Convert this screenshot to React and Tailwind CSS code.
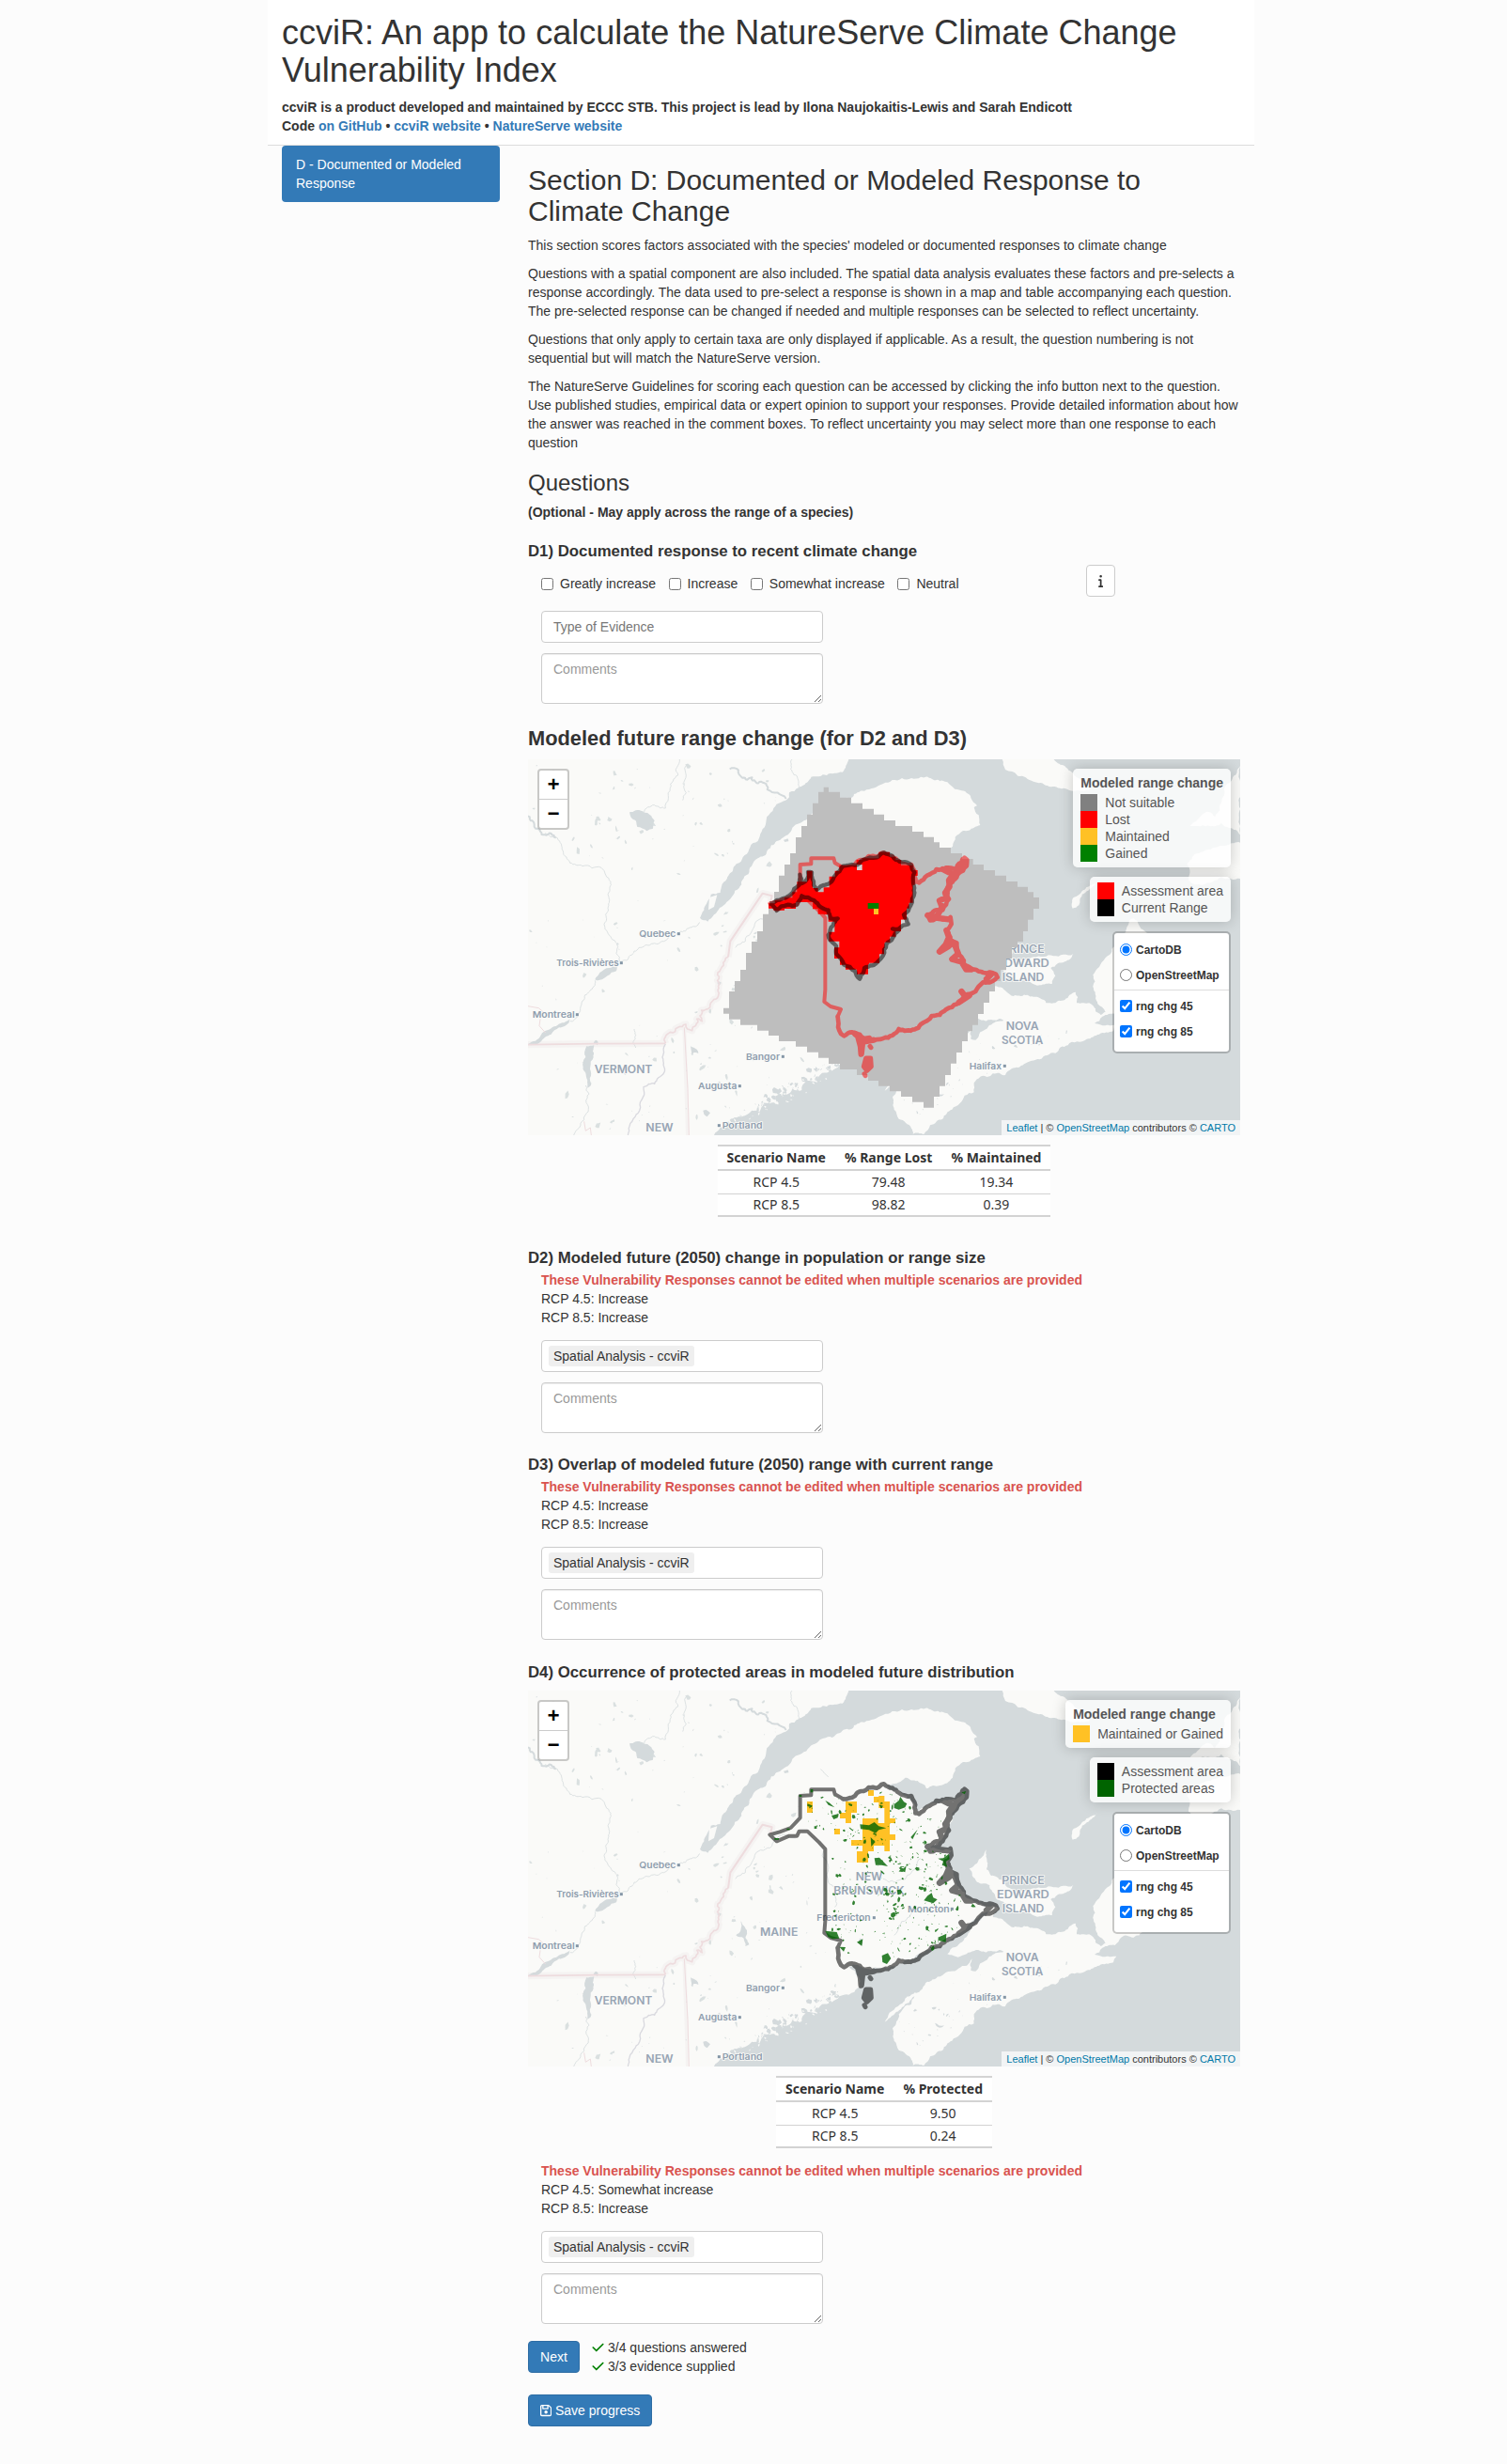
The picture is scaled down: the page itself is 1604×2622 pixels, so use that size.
import React from "react";
import { FaInfo, FaCheck } from "react-icons/fa6";

/* ---------- deterministic geometry helpers for the map drawing ---------- */

function rng(seed) {
  let s = seed;
  return () => {
    s = (s + 0x6d2b79f5) | 0;
    let t = Math.imul(s ^ (s >>> 15), 1 | s);
    t = (t + Math.imul(t ^ (t >>> 7), 61 | t)) ^ t;
    return ((t ^ (t >>> 14)) >>> 0) / 4294967296;
  };
}

function parse(str) {
  return str.trim().split(/\s+/).map((p) => p.split(",").map(Number));
}

// Subdivides every edge and shifts the midpoints, which gives a natural shoreline.
function rough(str, amp = 0.2, seed = 7, min = 9) {
  const rand = rng(seed);
  const pts = parse(str);
  const out = [pts[0]];
  const split = (a, b) => {
    const dx = b[0] - a[0];
    const dy = b[1] - a[1];
    const d = Math.hypot(dx, dy);
    if (d < min || d > 420) {
      out.push(b);
      return;
    }
    const k = (rand() - 0.5) * 2 * amp * (d > 60 ? 0.4 : 1);
    const m = [(a[0] + b[0]) / 2 - dy * k, (a[1] + b[1]) / 2 + dx * k];
    split(a, m);
    split(m, b);
  };
  for (let i = 1; i < pts.length; i++) split(pts[i - 1], pts[i]);
  return "M" + out.map((p) => p[0].toFixed(1) + "," + p[1].toFixed(1)).join("L");
}

function inside(pt, poly) {
  let c = false;
  for (let i = 0, j = poly.length - 1; i < poly.length; j = i++) {
    const [xi, yi] = poly[i];
    const [xj, yj] = poly[j];
    if (yi > pt[1] !== yj > pt[1] && pt[0] < ((xj - xi) * (pt[1] - yi)) / (yj - yi) + xi) c = !c;
  }
  return c;
}

function specks(poly, count, seed, min, max) {
  const rand = rng(seed);
  const xs = poly.map((p) => p[0]);
  const ys = poly.map((p) => p[1]);
  const x0 = Math.min(...xs);
  const y0 = Math.min(...ys);
  const w = Math.max(...xs) - x0;
  const h = Math.max(...ys) - y0;
  let d = "";
  let n = 0;
  while (n < count) {
    const p = [x0 + rand() * w, y0 + rand() * h];
    if (!inside(p, poly)) continue;
    n++;
    const r = min + Math.pow(rand(), 2.4) * (max - min);
    const a0 = rand() * 6.28;
    const flat = 0.25 + rand() * 0.6;
    const k = 5 + Math.floor(rand() * 3);
    const q = [];
    for (let i = 0; i < k; i++) {
      const a = (i / k) * 6.28;
      const rr = r * (0.5 + rand() * 0.8);
      const ex = Math.cos(a) * rr;
      const ey = Math.sin(a) * rr * flat;
      q.push((p[0] + ex * Math.cos(a0) - ey * Math.sin(a0)).toFixed(1) + "," + (p[1] + ex * Math.sin(a0) + ey * Math.cos(a0)).toFixed(1));
    }
    d += "M" + q.join("L") + "Z";
  }
  return d;
}

/* ------------------------------ base map ------------------------------ */

const SEA = rough(
  "555,515 570,480 590,440 620,435 632,400 655,370 680,340 715,290 740,270 752,240 780,180 790,165 840,130 840,115 870,100 900,80 910,65 960,60 1010,50 1030,9 2280,9 2280,1209 600,1209 620,1185 645,1165 690,1150 720,1130 745,1135 765,1108 800,1110 795,1085 830,1080 850,1060 880,1065 895,1035 930,1040 945,1010 975,1005 1000,985 1030,980 1065,957 1060,920 1030,890 1060,885 1100,900 1140,895 1185,885 1240,862 1290,835 1345,815 1390,780 1430,740 1450,725 1475,715 1440,750 1410,790 1370,828 1345,850 1400,852 1450,840 1530,845 1490,852 1450,880 1435,905 1420,902 1425,865 1330,917 1270,952 1210,992 1160,1037 1145,1067 1200,1020 1240,985 1230,1010 1190,1042 1170,1087 1175,1127 1190,1157 1230,1187 1235,1206 1270,1206 1290,1177 1330,1157 1360,1127 1385,1107 1400,1082 1430,1072 1430,1042 1450,1022 1490,1012 1530,1017 1550,997 1590,982 1640,967 1690,947 1730,922 1790,902 1830,887 1875,877 1885,857 1815,852 1840,830 1860,822 1880,822 1900,797 1940,797 1970,777 2000,770 2100,700 2100,640 1975,557 1940,517 1925,525 1915,560 1880,600 1870,617 1830,672 1810,697 1812,740 1825,790 1850,815 1835,825 1812,797 1780,787 1758,787 1755,752 1720,777 1685,787 1660,787 1620,767 1580,765 1535,752 1490,732 1510,705 1490,695 1440,685 1405,670 1385,640 1365,600 1345,565 1360,520 1290,510 1330,480 1350,440 1360,400 1400,350 1395,330 1370,357 1330,362 1290,370 1250,398 1235,365 1215,345 1160,325 1140,308 1170,307 1195,300 1210,287 1250,297 1280,322 1320,312 1362,287 1370,257 1395,237 1430,227 1450,219 1445,187 1430,162 1440,157 1420,132 1385,107 1330,77 1260,65 1200,69 1140,87 1080,110 1000,145 905,190 880,210 840,245 800,270 770,300 740,325 720,350 690,395 680,420 640,465 600,505 580,527 555,515",
  0.16,
  11
);

const ISLANDS = [
  rough("1520,9 1530,42 1570,62 1620,80 1710,103 1760,108 1800,106 1790,90 1750,60 1715,28 1685,9", 0.12, 3),
  rough("1415,577 1440,560 1470,517 1474,560 1470,580 1485,600 1520,615 1560,650 1620,640 1747,630 1720,655 1675,675 1690,700 1680,725 1640,730 1580,715 1540,700 1500,672 1480,630 1440,620 1415,577", 0.15, 5),
  rough("1742,470 1748,450 1775,430 1805,410 1825,398 1815,412 1775,440 1765,475 1745,485 1742,470", 0.15, 9),
  rough("2110,345 2140,310 2200,290 2280,275 2280,390 2220,385 2160,410 2115,395 2110,345", 0.15, 13),
  rough("2120,222 2180,177 2200,192 2230,100 2280,30 2280,250 2220,212 2140,222", 0.15, 15),
];

const LAKES = [
  rough("330,178 350,172 372,175 400,190 410,205 405,230 385,238 355,225 350,205 335,195 330,178", 0.12, 4),
  rough("220,712 235,690 265,675 290,672 288,685 260,700 225,715", 0.12, 6),
  rough("6,918 30,908 55,880 80,868 100,858 140,838 137,850 105,865 80,887 45,912 15,922", 0.12, 8),
  rough("192,925 217,922 215,960 205,990 207,1050 196,1058 190,1010 182,992 190,960 192,925", 0.15, 10),
  rough("215,915 222,905 230,912 228,922 215,915", 0.15, 12),
  rough("565,1130 575,1128 588,1138 578,1150 568,1142", 0.2, 14),
  rough("685,745 695,760 705,780 712,820 700,825 695,800 670,790 685,775 685,745", 0.2, 16),
  rough("822,266 835,262 838,271 826,273", 0.2, 17),
  rough("525,925 545,935 550,948 535,945 530,955", 0.2, 18),
  rough("1065,800 1072,802 1070,825 1060,815", 0.2, 19),
  rough("1305,1070 1335,1078 1320,1085 1310,1080", 0.3, 20),
];

const RIVERS = [
  "490,9 485,60 460,100 445,165 410,155 375,180",
  "60,245 100,260 140,340 180,350 240,355 270,400 250,540 290,600 300,655 360,610 440,590 490,560 555,530",
  "220,715 180,780 165,830 140,845",
  "850,9 850,50 870,80 870,100",
  "510,30 505,90 500,140",
  "190,1050 185,1160 152,1209",
  "345,870 350,890 342,910 350,930",
  "668,610 700,590 730,535 785,505 830,470 860,480",
  "940,260 965,285",
  "950,520 960,600 990,650 985,700",
  "1175,790 1190,760 1215,740 1240,700",
  "1140,610 1180,620 1230,590 1260,545",
];

const WIDE_RIVERS = ["650,40 690,68 750,80 770,105 830,135", "6,190 20,205 30,230 60,250 95,260"];

const NORTH_LAND = parse("6,9 480,9 760,30 820,130 740,220 690,300 600,400 540,480 480,420 250,330 6,280");
const SOUTH_LAND = parse("600,520 740,380 860,260 900,300 880,560 1000,960 850,1050 620,1160 520,1209 150,1209 80,960 440,930 620,700");
const WEST_LAND = parse("6,300 260,360 560,560 560,780 440,900 6,780");
const MAINE_COAST = parse("640,1130 760,1090 900,1010 1000,975 1010,1000 930,1060 820,1110 690,1175 620,1200");
const LAKE_SPECKS = specks(NORTH_LAND, 60, 21, 2, 13) + specks(SOUTH_LAND, 100, 33, 2, 13) + specks(WEST_LAND, 22, 45, 2, 11);
const BAY_SPECKS = specks(parse("600,1190 760,1085 900,1000 1000,960 1000,990 900,1060 760,1120 640,1180"), 75, 51, 2, 14);
const ISLET_SPECKS = specks(MAINE_COAST, 55, 57, 2, 9);
const NS_SPECKS = specks(parse("1180,1060 1300,960 1420,900 1560,880 1700,850 1780,870 1540,970 1400,1060 1260,1150 1200,1130"), 40, 63, 1.5, 9);

const BORDER = rough(
  "445,916 460,880 485,865 510,855 530,875 545,838 562,845 560,810 600,775 615,740 612,690 645,640",
  0.25,
  23
);
const CONNECTICUT = rough("445,918 435,960 440,1010 410,1045 375,1055 365,1120 330,1180 325,1209", 0.15, 25);

function BaseMap() {
  return (
    <g>
      <rect x="6" y="9" width="2274" height="1200" fill="#fafaf8" />
      <g fill="none" stroke="#f5f3f2" strokeWidth="22" strokeLinejoin="round">
        <path d="M6,920L220,917L445,916" />
        <path d={BORDER} />
        <path d="M645,640L652,590L755,437L785,445L780,465" />
        <path d="M505,865L516,1209" strokeWidth="12" />
      </g>
      <path d={SEA} fill="#d4dadc" />
      <g fill="#d4dadc">
        {LAKES.map((d, i) => (
          <path key={i} d={d + "Z"} />
        ))}
        <path d={LAKE_SPECKS} opacity="0.85" />
        <path d={BAY_SPECKS} />
        <path d={NS_SPECKS} />
      </g>
      <g fill="#fafaf8">
        {ISLANDS.map((d, i) => (
          <path key={i} d={d + "Z"} />
        ))}
        <path d={ISLET_SPECKS} />
        <path d="M585,450L610,442L600,480L582,490Z" />
      </g>
      <g fill="none" stroke="#dde2e3" strokeWidth="3" strokeLinejoin="round">
        {RIVERS.map((p, i) => (
          <path key={i} d={rough(p, 0.2, 70 + i)} />
        ))}
      </g>
      <g fill="none" stroke="#d4dadc" strokeWidth="6" strokeLinejoin="round">
        {WIDE_RIVERS.map((p, i) => (
          <path key={i} d={rough(p, 0.3, 90 + i)} />
        ))}
      </g>
      <g fill="none" stroke="#eedcde" strokeWidth="5" strokeLinejoin="round">
        <path d="M6,920L220,917L445,916" />
        <path d={BORDER} />
        <path d="M645,640L652,590L755,437L785,445L780,465" strokeWidth="6" />
        <path d="M505,865L516,1060L520,1209" strokeWidth="3" />
        <path d="M6,797L40,803L60,820M45,838L42,860L62,882" strokeWidth="3" />
        <path d="M185,1165L190,1195L205,1185L208,1209" strokeWidth="3" />
      </g>
      <path d={CONNECTICUT} fill="none" stroke="#d9d9df" strokeWidth="4" />
    </g>
  );
}

const CITIES = [
  ["Quebec", 361, 577, 117, 487, 566],
  ["Trois-Rivières", 97, 669, 199, 304, 659],
  ["Montreal", 20, 833, 135, 163, 824],
  ["Bangor", 702, 969, 108, 820, 958],
  ["Augusta", 549, 1062, 124, 682, 1052],
  ["Portland", 626, 1188, 129, 616, 1178],
  ["Halifax", 1415, 998, 103, 1528, 988],
  ["Fredericton", 928, 744, 172, 1111, 734],
  ["Moncton", 1218, 716, 134, 1360, 706],
];

const REGIONS = [
  ["VERMONT", 218, 1010, 185],
  ["NEW", 382, 1197, 88],
  ["MAINE", 747, 793, 121],
  ["NEW", 1052, 616, 86],
  ["BRUNSWICK", 982, 660, 226],
  ["PRINCE", 1519, 628, 136],
  ["EDWARD", 1503, 672, 167],
  ["ISLAND", 1520, 716, 134],
  ["NOVA", 1532, 874, 105],
  ["SCOTIA", 1518, 918, 133],
];

function Labels() {
  return (
    <g fill="#8f9eae" stroke="#fafaf8" strokeWidth="5" strokeLinejoin="round" paintOrder="stroke" fontFamily="Inter, sans-serif">
      {CITIES.map(([t, x, y, w, dx, dy]) => (
        <g key={t}>
          <text x={x} y={y} fontSize="28" fontWeight="600" textLength={w} lengthAdjust="spacingAndGlyphs">
            {t}
          </text>
          <rect x={dx - 4.5} y={dy - 4.5} width="9" height="9" fill="#8496a6" strokeWidth="3" />
        </g>
      ))}
      {REGIONS.map(([t, x, y, w], i) => (
        <text key={i} x={x} y={y} fontSize="34" fontWeight="600" fill="#98a5b4" textLength={w} lengthAdjust="spacingAndGlyphs">
          {t}
        </text>
      ))}
    </g>
  );
}

/* ------------------------------ overlays ------------------------------ */

const SUITABILITY =
  "M950,98H966V113H1002V131H1038V149H1074V167H1110V185H1143V204H1179V222H1233V240H1269V257H1302V274H1320V291H1356V309H1392V327H1427V345H1461V363H1497V380H1533V399H1569V416H1602V433H1620V450H1638V486H1620V521H1602V558H1587V591H1569V610H1551V645H1533V682H1515V717H1497V750H1479V786H1461V822H1443V857H1425V877H1410V909H1392V945H1374V980H1356V1017H1338V1052H1320V1086H1302V1121H1269V1103H1233V1086H1197V1069H1161V1052H1125V1035H1092V1017H1056V999H1002V981H966V962H933V944H897V926H861V909H807V891H774V875H738V857H684V839H648V821H630V803H648V750H666V717H684V681H702V627H720V591H738V558H756V503H774V468H792V432H807V380H825V345H843V309H861V258H879V222H897V185H915V149H933V113H950Z";

const ASSESSMENT_INLAND =
  "M245,575L255,552L222,543L202,528L205,490L205,260L185,238L148,203L122,203L115,218L90,218L50,235L28,214L60,205L95,192L125,160L125,90L160,88L160,70L232,70L236,85L262,100";
const ASSESSMENT_COAST = rough(
  "262,100 300,90 320,75 370,65 392,52 420,65 440,80 480,90 490,110 493,145 505,148 530,125 560,105 590,100 620,105 640,85 650,68 658,75 645,110 625,130 605,150 595,175 600,200 580,235 535,250 540,268 580,265 605,258 608,280 595,300 605,330 625,340 625,370 640,385 650,410 680,425 710,435 750,440 755,450 710,465 685,495 650,510 640,525 610,545 590,553 545,573 510,600 465,620 440,615 420,635 390,645 350,650 330,645 315,632 290,625 265,637 250,620 245,575",
  0.16,
  31,
  12
);
const ASSESSMENT_SHOALS =
  "M645,75L638,105L615,120L600,115L580,105M615,120L600,140L602,160L588,180L592,195L570,205L578,225L565,250L548,262L532,252M545,258L600,265M592,300L600,322L590,345L570,368L600,350L612,340M620,350L630,375L610,392L640,400L655,425L670,425M640,495L655,515L632,530L665,508M310,640L318,670L320,695L325,650L345,645M300,630L330,655L360,650M735,440L720,455";
const GRAND_MANAN = "M335,708L350,708L352,735L338,748L328,735Z";

function AssessmentOutline({ color, opacity }) {
  return (
    <g opacity={opacity} fill="none" stroke={color} strokeWidth="14" strokeLinejoin="round" strokeLinecap="round">
      <path d={ASSESSMENT_INLAND} strokeWidth="12" />
      <path d={ASSESSMENT_COAST} />
      <path d={ASSESSMENT_SHOALS} strokeWidth="19" />
      <path d={GRAND_MANAN} fill={color} strokeWidth="15" />
      <path d="M330,758L333,764M348,670L351,674" strokeWidth="15" />
    </g>
  );
}

const CURRENT_RANGE = rough(
  "28,214 60,203 95,185 122,155 124,122 130,150 148,135 150,114 162,115 168,155 178,170 205,155 225,145 245,115 262,95 300,92 325,75 370,67 392,52 425,70 450,82 480,92 490,115 486,150 490,180 478,220 456,250 470,280 440,295 420,295 440,300 400,345 390,380 355,412 330,420 327,435 315,455 300,430 265,410 240,375 240,350 220,330 215,315 230,285 245,262 222,262 215,235 190,225 170,205 130,190 115,218 85,218 50,237 28,214",
  0.14,
  37,
  12
);
const LOST =
  "M24,214H45V205H75V196H100V178H115V145H130V145H147V110H164V145H165V165H182V178H200V163H218V128H236V110H250V92H305V75H323V70H376V50H411V65H430V75H447V92H485V108H500V126H491V155H485V212H473V230H465V266H447V285H447V303H430V320H412V338H395V357H393V376H378V404H345V408H342V440H306V425H270V410H252V390H234V355H250V335H217V305H235V272H215V250H200V248H182V232H165V210H147V210H111V231H75V236H40V230H24Z";

function RangeChangeOverlay() {
  return (
    <g>
      <path d={SUITABILITY} fill="#bebebe" />
      <g transform="translate(750,255)">
        <AssessmentOutline color="#ff0000" opacity="0.5" />
        <path d={LOST} fill="#ff0000" />
        <path d="M306,90H323V108H306ZM447,266H465V284H447Z" fill="#d3d3d3" />
        <path d="M341,213H376V231H341Z" fill="#008000" />
        <path d="M360,231H375V249H360Z" fill="#ffc125" />
        <path d={CURRENT_RANGE} fill="none" stroke="#000" strokeOpacity="0.5" strokeWidth="13" strokeLinejoin="round" />
      </g>
    </g>
  );
}

const MAINTAINED =
  "M147,111h18v36h-18ZM270,111h36v36h-18v33h-18v-15h-18v-18h18ZM342,75h18v18h-18ZM376,93h18v18h17v54h18v15h-18v36h18v18h-18v36h-17v-18h-34v18h-18v36h-36v-36h18v-18h-36v-18h36v-69h50v15h20v-48h-18v-18h-16v-18h16ZM234,198h18v18h-18Z";

const PROTECTED_BLOBS =
  "M425,120L440,108L445,96L456,112L466,118L460,130L440,137L425,132ZM316,184L345,187L362,177L376,190L400,196L376,202L366,212L345,202L318,199ZM362,292L378,290L405,318L385,314L366,314ZM440,322L455,325L464,316L460,337L447,332ZM520,427L532,412L545,403L550,418L563,424L550,436ZM205,524L242,528L250,548L228,550L214,543ZM386,603L405,595L415,612L402,630L388,624ZM565,545L592,533L590,560L568,555ZM565,293L582,292L600,278L602,295L590,303L595,320L578,314L582,302ZM225,156L248,150L245,163L232,168ZM250,575L270,576L264,590ZM205,108L218,115L235,130L215,122ZM306,560L325,550L322,572ZM478,225L500,200L490,220L484,232ZM350,225L365,240L352,255ZM640,82L655,78L650,88Z";

const PARKS = specks(parse("140,110 230,90 270,115 380,75 480,110 500,160 585,130 570,220 530,260 590,280 600,330 560,340 470,330 350,290 230,250 140,170"), 150, 101, 1.5, 9) +
  specks(parse("220,290 560,270 600,380 690,450 620,520 480,600 300,625 255,560 220,520"), 180, 113, 1.5, 8) +
  specks(parse("380,400 470,390 440,500 385,490"), 26, 127, 3, 10) +
  specks(parse("520,575 570,545 620,505 600,540 550,580"), 16, 131, 2, 8);

function ProtectedOverlay() {
  return (
    <g transform="translate(750,252)">
      <path d={MAINTAINED} fill="#ffc125" />
      <g transform="translate(0,3)">
        <AssessmentOutline color="#000000" opacity="0.54" />
      </g>
      <g fill="#006400" opacity="0.8">
        <path d={PARKS} />
        <path d={PROTECTED_BLOBS} />
        <path d="M158,72h8v10h-8ZM122,90h8v6h-8ZM82,197h10v5h-10ZM43,228h14v5h-14ZM170,190h8v8h-8ZM148,118l16,6l-2,6l-14,-4Z" />
      </g>
    </g>
  );
}

/* ---------------------------- map widgets ----------------------------- */

function Legend({ title, items }) {
  return (
    <div className="rounded-[5px] bg-white/80 px-2 py-1.5 text-[14px] leading-[18px] text-[#555] shadow-[0_0_15px_rgba(0,0,0,0.2)]">
      {title && <div className="mb-[3px] font-bold">{title}</div>}
      {items.map(([color, label]) => (
        <div key={label} className="flex h-[18px] items-center whitespace-nowrap">
          <i className="mr-2 block size-[18px]" style={{ background: color }} />
          {label}
        </div>
      ))}
    </div>
  );
}

function LayerRow({ type, label, checked, name }) {
  return (
    <label className="flex h-[27px] items-start">
      <input type={type} name={name} defaultChecked={checked} className="m-0 mt-[5px] mr-1 size-[13px]" />
      <span className="leading-[25px]">{label}</span>
    </label>
  );
}

function LayerControl({ name }) {
  return (
    <div className="h-[130px] w-[126px] rounded-[5px] border-2 border-black/20 bg-white bg-clip-padding pt-[6px] text-[12px] font-bold text-[#333]">
      <div className="pl-1.5">
        <LayerRow type="radio" name={name} label="CartoDB" checked />
        <LayerRow type="radio" name={name} label="OpenStreetMap" />
      </div>
      <div className="mb-[5px] border-t border-[#ddd]" />
      <div className="pl-1.5">
        <LayerRow type="checkbox" label="rng chg 45" checked />
        <LayerRow type="checkbox" label="rng chg 85" checked />
      </div>
    </div>
  );
}

function LeafletMap({ children, legends, name }) {
  return (
    <div className="relative h-[400px] w-[758px] overflow-hidden">
      <svg viewBox="6 9 2274 1200" className="block h-[400px] w-[758px]">
        <BaseMap />
        <Labels />
        {children}
      </svg>
      <div className="absolute top-[10px] left-[10px] w-[34px] rounded-[4px] border-2 border-black/20 bg-white bg-clip-padding text-center font-['Liberation_Mono',monospace] text-[22px] font-bold text-black">
        <div className="h-[31px] border-b border-[#ccc] leading-[34px]">+</div>
        <div className="h-[30px] leading-[33px]">−</div>
      </div>
      <div className="absolute top-[10px] right-[10px] flex flex-col items-end gap-[10px]">
        {legends}
        <LayerControl name={name} />
      </div>
      <div className="absolute right-0 bottom-0 h-4 bg-white/70 px-[5px] text-[11px] leading-4 whitespace-nowrap text-[#333]">
        <span className="text-[#0078a8]">Leaflet</span> | © <span className="text-[#0078a8]">OpenStreetMap</span> contributors ©{" "}
        <span className="text-[#0078a8]">CARTO</span>
      </div>
    </div>
  );
}

/* ----------------------------- page parts ----------------------------- */

function DataTable({ head, rows }) {
  return (
    <table className="mx-auto border-collapse border-y-2 border-[#d3d3d3] bg-white text-center font-['Noto_Sans',sans-serif] text-[14px] leading-4 text-[#333]">
      <thead>
        <tr className="h-[26px] border-b-2 border-[#d3d3d3]">
          {head.map((h) => (
            <th key={h} className="px-[10px] py-0 font-bold">
              {h}
            </th>
          ))}
        </tr>
      </thead>
      <tbody>
        {rows.map((r) => (
          <tr key={r[0]} className="h-[25px] border-b border-[#d3d3d3] last:h-6 last:border-b-0">
            {r.map((c) => (
              <td key={c} className="p-0">
                {c}
              </td>
            ))}
          </tr>
        ))}
      </tbody>
    </table>
  );
}

function Comments() {
  return (
    <textarea
      placeholder="Comments"
      className="mt-[11px] block h-[54px] w-[300px] resize rounded-[4px] border border-[#ccc] bg-white px-3 py-1.5 text-[14px] leading-5 shadow-[inset_0_1px_1px_rgba(0,0,0,0.075)] placeholder:text-[#999]"
    />
  );
}

function ScenarioAnswer({ first, second }) {
  return (
    <div className="ml-[14px]">
      <div className="font-bold text-[#d9534f]">These Vulnerability Responses cannot be edited when multiple scenarios are provided</div>
      <div>RCP 4.5: {first}</div>
      <div>RCP 8.5: {second}</div>
      <div className="mt-[14px] flex h-[34px] w-[300px] items-center rounded-[4px] border border-[#ccc] bg-white pl-[7px]">
        <span className="h-[22px] rounded-[3px] bg-[#efefef] px-[5px] leading-[22px]">Spatial Analysis - ccviR</span>
      </div>
      <Comments />
    </div>
  );
}

function QuestionTitle({ children }) {
  return <h4 className="h-5 text-[16.8px] leading-[22px] font-bold whitespace-nowrap">{children}</h4>;
}

function SaveIcon() {
  return (
    <svg viewBox="0 0 448 512" className="mr-1 inline-block h-[14px] w-[12.25px] align-[-2px]" fill="currentColor">
      <path d="M48 96V416c0 8.800 7.200 16 16 16H384c8.800 0 16-7.200 16-16V170.500c0-4.200-1.700-8.300-4.700-11.300l33.900-33.900c12 12 18.700 28.300 18.700 45.300V416c0 35.300-28.700 64-64 64H64c-35.300 0-64-28.700-64-64V96C0 60.700 28.700 32 64 32H309.500c17 0 33.300 6.700 45.300 18.700l74.500 74.500-33.900 33.900L320.800 84.700V184c0 13.300-10.700 24-24 24H104c-13.300 0-24-10.700-24-24V80H64c-8.800 0-16 7.200-16 16zm80-16v80H272V80H128zm32 240a64 64 0 1 1 128 0 64 64 0 1 1-128 0z" />
    </svg>
  );
}

export default function App() {
  return (
    <div className="h-[2622px] overflow-hidden bg-[#fcfcfc] font-['Liberation_Sans',Arial,sans-serif] text-[14px] leading-5 text-[#333]">
      <div className="ml-[285px] w-[1050px]">
        <header className="h-[155px] border-b border-[#ddd] bg-white px-[15px] pt-[15px]">
          <h1 className="mb-[10px] h-[79px] text-[36px] leading-[39.6px]">ccviR: An app to calculate the NatureServe Climate Change Vulnerability Index</h1>
          <div className="font-bold">
            ccviR is a product developed and maintained by ECCC STB. This project is lead by Ilona Naujokaitis-Lewis and Sarah Endicott
            <br />
            Code <a className="text-[#337ab7]">on GitHub</a> • <a className="text-[#337ab7]">ccviR website</a> •{" "}
            <a className="text-[#337ab7]">NatureServe website</a>
          </div>
        </header>

        <div className="flex items-start gap-[30px] pl-[15px]">
          <nav className="w-[232px] shrink-0">
            <a className="block rounded-[4px] bg-[#337ab7] px-[15px] py-[10px] text-white">D - Documented or Modeled Response</a>
          </nav>

          <main className="w-[758px] shrink-0 pt-5">
            <h2 className="text-[30px] leading-[33px]">Section D: Documented or Modeled Response to Climate Change</h2>
            <p className="mt-[10px]">This section scores factors associated with the species' modeled or documented responses to climate change</p>
            <p className="mt-[10px]">
              Questions with a spatial component are also included. The spatial data analysis evaluates these factors and pre-selects a
              response accordingly. The data used to pre-select a response is shown in a map and table accompanying each question. The
              pre-selected response can be changed if needed and multiple responses can be selected to reflect uncertainty.
            </p>
            <p className="mt-[10px]">
              Questions that only apply to certain taxa are only displayed if applicable. As a result, the question numbering is not
              sequential but will match the NatureServe version.
            </p>
            <p className="mt-[10px]">
              The NatureServe Guidelines for scoring each question can be accessed by clicking the info button next to the question. Use
              published studies, empirical data or expert opinion to support your responses. Provide detailed information about how the
              answer was reached in the comment boxes. To reflect uncertainty you may select more than one response to each question
            </p>
            <h3 className="mt-5 h-9 text-[24px] leading-[26px]">Questions</h3>
            <h5 className="h-[39px] leading-4 font-bold">(Optional - May apply across the range of a species)</h5>

            <QuestionTitle>D1) Documented response to recent climate change</QuestionTitle>
            <div className="mt-[5px] ml-[14px] flex h-[34px] items-start">
              <div className="flex w-[580px] gap-[13.6px] pt-[10px]">
                {["Greatly increase", "Increase", "Somewhat increase", "Neutral"].map((t) => (
                  <label key={t} className="flex">
                    <input type="checkbox" className="m-0 mt-1 mr-[7px] size-[13px]" />
                    {t}
                  </label>
                ))}
              </div>
              <button className="flex h-[34px] w-[31px] items-center justify-center rounded-[4px] border border-[#ccc] bg-white">
                <FaInfo className="h-[14px] w-[5.25px]" />
              </button>
            </div>
            <div className="ml-[14px]">
              <div className="mt-[15px] h-[34px] w-[300px] rounded-[4px] border border-[#ccc] bg-white px-3 leading-[33px] text-[#777]">
                Type of Evidence
              </div>
              <Comments />
            </div>

            <h3 className="mt-[25px] h-[34px] text-[21.84px] leading-6 font-bold">Modeled future range change (for D2 and D3)</h3>
            <LeafletMap
              name="base-a"
              legends={
                <>
                  <Legend
                    title="Modeled range change"
                    items={[
                      ["#808080", "Not suitable"],
                      ["#ff0000", "Lost"],
                      ["#ffc125", "Maintained"],
                      ["#008000", "Gained"],
                    ]}
                  />
                  <Legend
                    items={[
                      ["#ff0000", "Assessment area"],
                      ["#000000", "Current Range"],
                    ]}
                  />
                </>
              }
            >
              <RangeChangeOverlay />
            </LeafletMap>
            <div className="h-[120px] pt-[10px]">
              <DataTable
                head={["Scenario Name", "% Range Lost", "% Maintained"]}
                rows={[
                  ["RCP 4.5", "79.48", "19.34"],
                  ["RCP 8.5", "98.82", "0.39"],
                ]}
              />
            </div>

            <QuestionTitle>D2) Modeled future (2050) change in population or range size</QuestionTitle>
            <div className="mt-1 h-[196px]">
              <ScenarioAnswer first="Increase" second="Increase" />
            </div>

            <QuestionTitle>D3) Overlap of modeled future (2050) range with current range</QuestionTitle>
            <div className="mt-1 h-[197px]">
              <ScenarioAnswer first="Increase" second="Increase" />
            </div>

            <QuestionTitle>D4) Occurrence of protected areas in modeled future distribution</QuestionTitle>
            <div className="mt-[10px]">
              <LeafletMap
                name="base-b"
                legends={
                  <>
                    <Legend title="Modeled range change" items={[["#ffc125", "Maintained or Gained"]]} />
                    <Legend
                      items={[
                        ["#000000", "Assessment area"],
                        ["#006400", "Protected areas"],
                      ]}
                    />
                  </>
                }
              >
                <ProtectedOverlay />
              </LeafletMap>
            </div>
            <div className="h-[101px] pt-[10px]">
              <DataTable
                head={["Scenario Name", "% Protected"]}
                rows={[
                  ["RCP 4.5", "9.50"],
                  ["RCP 8.5", "0.24"],
                ]}
              />
            </div>
            <ScenarioAnswer first="Somewhat increase" second="Increase" />

            <div className="mt-[18px] flex gap-[13px]">
              <button className="h-[34px] w-[55px] rounded-[4px] border border-[#2e6da4] bg-[#337ab7] text-white">Next</button>
              <div className="-mt-[3px]">
                {["3/4 questions answered", "3/3 evidence supplied"].map((t) => (
                  <div key={t} className="flex items-center">
                    <FaCheck className="mr-1 h-[14px] w-[13px] text-[#008000]" />
                    {t}
                  </div>
                ))}
              </div>
            </div>
            <button className="mt-5 h-[34px] w-[132px] rounded-[4px] border border-[#2e6da4] bg-[#337ab7] text-white">
              <SaveIcon />
              Save progress
            </button>
          </main>
        </div>
      </div>
    </div>
  );
}
